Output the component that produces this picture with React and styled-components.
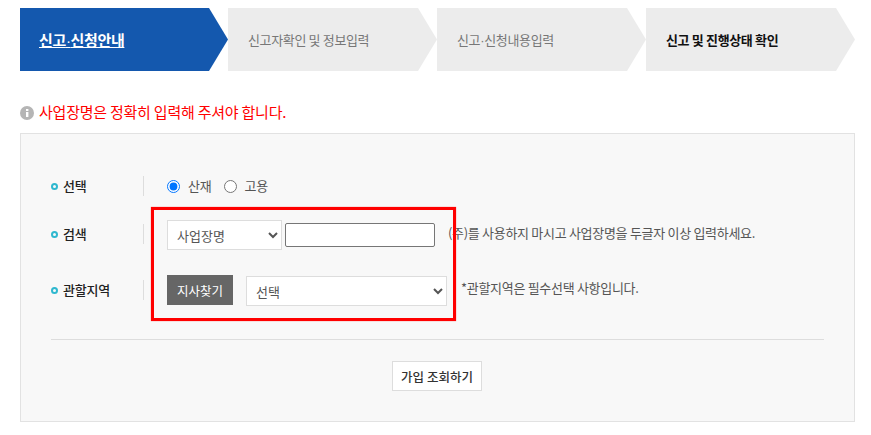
import styled, { createGlobalStyle } from 'styled-components';

const Global = createGlobalStyle`
    html, body {
        margin: 0;
        background: #fff;
    }
    body {
        font-family: "Noto Sans CJK KR", "Noto Sans", sans-serif;
        color: #333;
    }
`;

const Page = styled.div`
    width: 835px;
    padding: 8px 16px 13px 20px;
`;

const Steps = styled.ol`
    display: flex;
    list-style: none;
    margin: 0;
    padding: 0;
`;

const Step = styled.li`
    width: ${(p) => (p.$active ? 208 : 209)}px;
    height: 63px;
    flex: none;
    display: flex;
    align-items: center;
    box-sizing: border-box;
    padding-left: ${(p) => (p.$active ? 19 : 20)}px;
    font-size: ${(p) => (p.$active ? 15 : 13)}px;
    letter-spacing: -0.35px;
    font-weight: ${(p) => (p.$active || p.$strong ? 700 : 400)};
    color: ${(p) => (p.$active ? '#fff' : p.$strong ? '#111' : '#777')};
    text-decoration: ${(p) => (p.$active ? 'underline' : 'none')};
    background: ${(p) => (p.$active ? '#1458ae' : '#ececec')};
    clip-path: polygon(0 0, ${(p) => (p.$active ? 189 : 190)}px 0, 100% 50%, ${(p) => (p.$active ? 189 : 190)}px 100%, 0 100%);
`;

// the CJK font has a wide middle dot, the reference has a narrow one
const Dot = styled.span`
    font-family: "Liberation Sans", sans-serif;
    font-weight: 400;
`;

const Notice = styled.p`
    box-sizing: border-box;
    display: flex;
    align-items: center;
    gap: 5px;
    margin: 30px 0 0;
    height: 22px;
    padding-bottom: 2px;
    font-size: 15px;
    letter-spacing: -0.23px;
    color: #f00;
`;

const InfoMark = styled.svg`
    flex: none;
    margin-top: 4px;
`;

const Panel = styled.section`
    position: relative;
    box-sizing: border-box;
    margin-top: 10px;
    height: 289px;
    padding: 37px 30px 0;
    background: #f8f8f8;
    border: 1px solid #e2e2e2;
`;

const Row = styled.div`
    display: flex;
    align-items: center;
    height: 30px;
    margin-top: ${(p) => p.$gap || 0}px;
`;

const Label = styled.div`
    box-sizing: border-box;
    width: 93px;
    height: 20px;
    flex: none;
    display: flex;
    align-items: center;
    gap: 5px;
    padding-bottom: 2px;
    margin-bottom: ${(p) => p.$lift || 0}px;
    font-size: 13px;
    letter-spacing: -0.2px;
    font-weight: 500;
    color: #222;
    border-right: 1px solid #ddd;
    &::before {
        content: '';
        width: 3px;
        height: 3px;
        margin-top: 2px;
        border: 2px solid #2fb8cf;
        border-radius: 50%;
    }
`;

const Field = styled.div`
    display: flex;
    align-items: center;
    padding-left: 23px;
    font-size: 13px;
    letter-spacing: -0.2px;
    color: #555;
`;

const RadioItem = styled.label`
    display: flex;
    align-items: center;
    gap: 8px;
    margin-right: 12px;
    padding-bottom: 2px;
    input {
        margin: 2px 0 0;
        width: 13px;
        height: 13px;
    }
`;

const Select = styled.select`
    box-sizing: border-box;
    width: ${(p) => p.$width}px;
    height: 30px;
    padding-left: 5px;
    margin-left: ${(p) => p.$left || 0}px;
    margin-top: ${(p) => p.$top || 0}px;
    border: 1px solid #ddd;
    border-radius: 0;
    background-color: #fff;
    color: #555;
    font: inherit;
`;

const TextBox = styled.input`
    box-sizing: border-box;
    width: 150px;
    height: 24px;
    margin-left: 3px;
    border: 1px solid #767676;
    border-radius: 2px;
    background: #fff;
`;

const Hint = styled.span`
    margin-left: ${(p) => p.$left}px;
    margin-bottom: 5px;
    font-size: 13px;
    letter-spacing: -0.3px;
    color: #555;
    white-space: nowrap;
`;

const FindButton = styled.button`
    width: 66px;
    height: 30px;
    padding: 0;
    border: 0;
    background: #666;
    color: #fff;
    font: 400 12.5px "Noto Sans CJK KR", sans-serif;
`;

const Rule = styled.hr`
    margin: 34px 0 0;
    border: 0;
    border-top: 1px solid #ddd;
`;

const Actions = styled.div`
    display: flex;
    justify-content: center;
    margin-top: 21px;
`;

const LookupButton = styled.button`
    width: 90px;
    height: 30px;
    margin-right: 1px;
    padding: 0;
    border: 1px solid #ddd;
    background: #fff;
    color: #333;
    font: 500 12.5px "Noto Sans CJK KR", sans-serif;
`;

// red box drawn over the form, it is an annotation on the screenshot
const Highlight = styled.div`
    position: absolute;
    left: 130px;
    top: 73px;
    width: 299px;
    height: 108px;
    border: 3px solid #f00;
    box-shadow: 0 0 1px rgba(255, 0, 0, 0.6);
    pointer-events: none;
`;

function InfoIcon() {
    return (
        <InfoMark width="14" height="14" viewBox="0 0 14 14">
            <circle cx="7" cy="7" r="7" fill="#b5b5b5" />
            <rect x="6" y="6" width="2.4" height="5" fill="#fff" />
            <rect x="6" y="3" width="2.4" height="2" fill="#fff" />
        </InfoMark>
    );
}

export default function App() {
    return (
        <Page>
            <Global />
            <Steps>
                <Step $active>
                    <span>신고<Dot>·</Dot>신청안내</span>
                </Step>
                <Step>신고자확인 및 정보입력</Step>
                <Step>
                    <span>신고<Dot>·</Dot>신청내용입력</span>
                </Step>
                <Step $strong>신고 및 진행상태 확인</Step>
            </Steps>
            <Notice>
                <InfoIcon />
                사업장명은 정확히 입력해 주셔야 합니다.
            </Notice>
            <Panel>
                <Row>
                    <Label>선택</Label>
                    <Field>
                        <RadioItem>
                            <input type="radio" name="kind" defaultChecked />
                            산재
                        </RadioItem>
                        <RadioItem>
                            <input type="radio" name="kind" />
                            고용
                        </RadioItem>
                    </Field>
                </Row>
                <Row $gap={19}>
                    <Label $lift={2}>검색</Label>
                    <Field>
                        <Select $width={115}>
                            <option>사업장명</option>
                        </Select>
                        <TextBox type="text" />
                        <Hint $left={13}>(주)를 사용하지 마시고 사업장명을 두글자 이상 입력하세요.</Hint>
                    </Field>
                </Row>
                <Row $gap={25}>
                    <Label>관할지역</Label>
                    <Field>
                        <FindButton>지사찾기</FindButton>
                        <Select $width={201} $left={13} $top={2}>
                            <option>선택</option>
                        </Select>
                        <Hint $left={14}>*관할지역은 필수선택 사항입니다.</Hint>
                    </Field>
                </Row>
                <Rule />
                <Actions>
                    <LookupButton>가입 조회하기</LookupButton>
                </Actions>
                <Highlight />
            </Panel>
        </Page>
    );
}
